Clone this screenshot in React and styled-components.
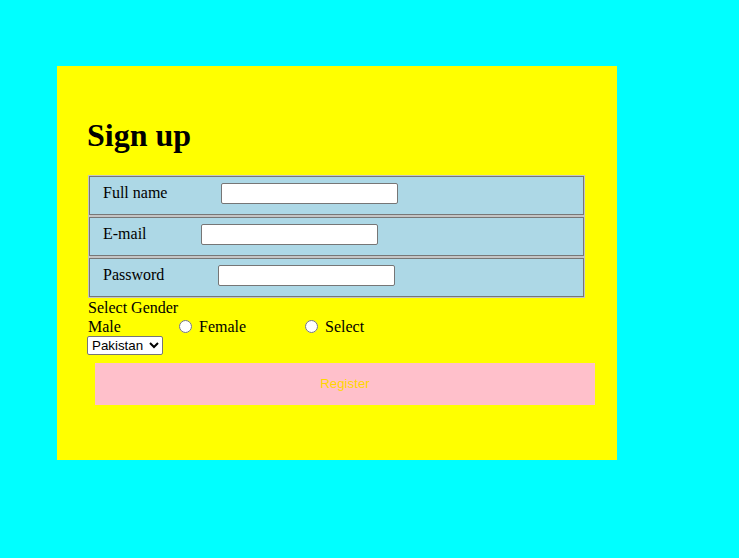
import React from "react";
import styled, { createGlobalStyle } from "styled-components";

const GlobalStyle = createGlobalStyle`
  body {
    margin: 0;
    background-color: cyan;
    font-family: "Liberation Serif", "Times New Roman", serif;
    font-size: 16px;
  }
`;

const Page = styled.div`
  padding: 66px 0 0 57px;
  min-height: 558px;
  box-sizing: border-box;
`;

const Card = styled.form`
  width: 560px;
  box-sizing: border-box;
  background-color: yellow;
  padding: 30px 0 55px 31px;
  display: flex;
  flex-direction: column;
  align-items: flex-start;
`;

const Title = styled.h1`
  font-size: 32px;
  font-weight: bold;
  margin: 21.44px 0 21.44px -1px;
  line-height: normal;
`;

const Rows = styled.div`
  display: flex;
  flex-direction: column;
  gap: 2px;
  margin-left: 1px;
`;

const Row = styled.div`
  width: 495px;
  height: 39px;
  box-sizing: border-box;
  background-color: lightblue;
  border: 1px solid #777;
  box-shadow: 0 0 0 1px #c4c4c4;
  padding: 6px 13px 10px;
  display: flex;
  align-items: center;
`;

const Label = styled.label`
  width: ${(p) => p.$width}px;
  flex-shrink: 0;
`;

const TextInput = styled.input`
  width: 177px;
  height: 21px;
  box-sizing: border-box;
  border: 1px solid #767676;
  border-radius: 2px;
  background: #fff;
  padding: 1px 2px;
  font-family: "Liberation Sans", Arial, sans-serif;
  font-size: 13.33px;
`;

const GenderTitle = styled.div`
  margin-top: 2px;
  line-height: 18px;
`;

const GenderRow = styled.div`
  display: flex;
  align-items: center;
  height: 19px;
`;

const OptionText = styled.span`
  width: ${(p) => p.$width}px;
  line-height: 19px;
`;

const Radio = styled.input`
  width: 13px;
  height: 13px;
  margin: 0 7px 0 0;
`;

const CountrySelect = styled.select`
  margin-left: -1px;
  width: 76px;
  height: 19px;
  font-family: "Liberation Sans", Arial, sans-serif;
  font-size: 13.33px;
  border: 1px solid #767676;
  border-radius: 2px;
  background: #fff;
  color: #000;
`;

const RegisterButton = styled.button`
  margin: 8px 0 0 7px;
  width: 500px;
  height: 42px;
  border: none;
  background-color: pink;
  color: gold;
  font-family: "Liberation Sans", Arial, sans-serif;
  font-size: 13.33px;
`;

const fields = [
  { label: "Full name", width: 118, type: "text" },
  { label: "E-mail", width: 98, type: "email" },
  { label: "Password", width: 115, type: "password" },
];

const App = () => {
  return (
    <Page>
      <GlobalStyle />
      <Card onSubmit={(e) => e.preventDefault()}>
        <Title>Sign up</Title>
        <Rows>
          {fields.map((f) => (
            <Row key={f.label}>
              <Label $width={f.width}>{f.label}</Label>
              <TextInput type={f.type} />
            </Row>
          ))}
        </Rows>
        <GenderTitle>Select Gender</GenderTitle>
        <GenderRow>
          <OptionText $width={91}>Male</OptionText>
          <Radio type="radio" name="gender" />
          <OptionText $width={106}>Female</OptionText>
          <Radio type="radio" name="gender" />
          <OptionText>Select</OptionText>
        </GenderRow>
        <CountrySelect defaultValue="Pakistan">
          <option>Pakistan</option>
          <option>India</option>
          <option>China</option>
        </CountrySelect>
        <RegisterButton type="submit">Register</RegisterButton>
      </Card>
    </Page>
  );
};

export default App;
